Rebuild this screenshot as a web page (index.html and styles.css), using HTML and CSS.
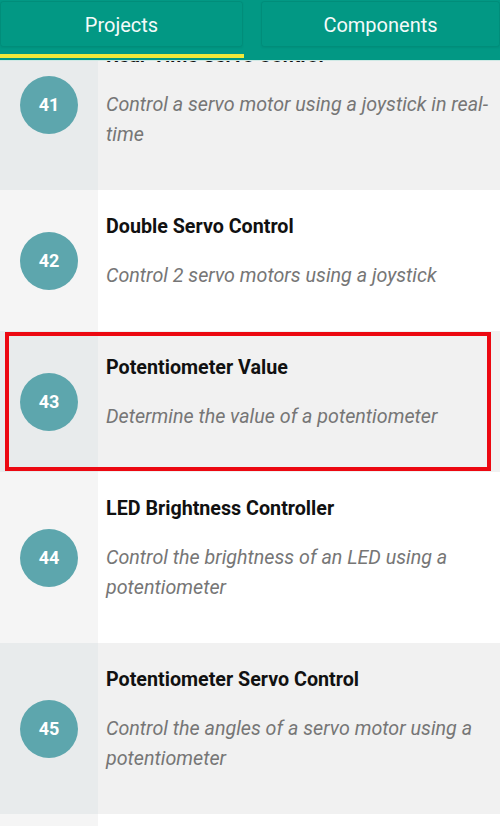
FILE: index.html
```html
<!DOCTYPE html>
<html lang="en">
<head>
  <meta charset="UTF-8" />
  <meta name="viewport" content="width=device-width, initial-scale=1.0"/>
  <title>Projects</title>
  <link rel="stylesheet" href="styles.css">
</head>
<body>
  <header class="topbar">
    <div class="tabs">
      <div class="tab tab-first">Projects</div>
      <div class="tab">Components</div>
    </div>
    <div class="indicator"></div>
  </header>

  <ul class="projects">
    <li class="project shade">
      <div class="num"><span class="badge">41</span></div>
      <div class="info">
        <h2>Real-Time Servo Control</h2>
        <p>Control a servo motor using a joystick in real-time</p>
      </div>
    </li>
    <li class="project">
      <div class="num"><span class="badge">42</span></div>
      <div class="info">
        <h2>Double Servo Control</h2>
        <p>Control 2 servo motors using a joystick</p>
      </div>
    </li>
    <li class="project shade selected">
      <div class="num"><span class="badge">43</span></div>
      <div class="info">
        <h2>Potentiometer Value</h2>
        <p>Determine the value of a potentiometer</p>
      </div>
    </li>
    <li class="project">
      <div class="num"><span class="badge">44</span></div>
      <div class="info">
        <h2>LED Brightness Controller</h2>
        <p>Control the brightness of an LED using a potentiometer</p>
      </div>
    </li>
    <li class="project shade">
      <div class="num"><span class="badge">45</span></div>
      <div class="info">
        <h2>Potentiometer Servo Control</h2>
        <p>Control the angles of a servo motor using a potentiometer</p>
      </div>
    </li>
    <!-- next row, only its top edge shows -->
    <li class="project stub">
      <div class="num"></div>
      <div class="info"></div>
    </li>
  </ul>
</body>
</html>
```

FILE: styles.css
```css
body {
  margin: 0;
  font-family: Roboto, "Noto Sans", sans-serif;
  background: #fff;
  overflow: hidden;
}
.topbar {
  position: fixed;
  top: 0;
  left: 0;
  right: 0;
  height: 61px;
  background: #029884;
  border-bottom: 1px solid #cfe9e5;
  box-sizing: border-box;
  z-index: 5;
}
.tabs {
  display: flex;
  gap: 18px;
  height: 46px;
  padding-top: 1px;
}
.tab {
  flex: 1;
  display: flex;
  align-items: center;
  justify-content: center;
  padding-top: 2px;
  color: #f4fbfa;
  font-size: 20px;
  border: 1px solid rgba(0, 0, 0, 0.07);
  border-radius: 3px;
  box-shadow: 0 1px 2px rgba(0, 0, 0, 0.06);
}
.tab-first {
  flex: 0 0 243px;
  box-sizing: border-box;
}
.indicator {
  margin-top: 7px;
  width: 244px;
  height: 4px;
  background: #f2e93a;
}
.projects {
  list-style: none;
  margin: 0;
  padding: 19px 0 0;
}
.project {
  position: relative;
  display: flex;
  background: #fff;
}
.project .num {
  flex: 0 0 98px;
  display: flex;
  align-items: center;
  justify-content: center;
  background: #f5f5f5;
}
.project.shade {
  background: #f1f1f1;
}
.project.shade .num {
  background: #e8ebec;
}
.project.stub {
  height: 40px;
}
.badge {
  width: 58px;
  height: 58px;
  border-radius: 50%;
  background: #5da6ad;
  color: #fff;
  font-weight: bold;
  font-size: 18px;
  display: flex;
  align-items: center;
  justify-content: center;
}
.info {
  flex: 1;
  padding: 22px 10px 40px 8px;
}
.info h2 {
  margin: 0;
  font-size: 19.7px;
  line-height: 30px;
  font-weight: bold;
  color: #111;
}
.info p {
  margin: 19px 0 0;
  font-size: 19.7px;
  line-height: 30px;
  font-style: italic;
  color: #767676;
}
.selected::after {
  content: "";
  position: absolute;
  top: 1px;
  bottom: 1px;
  left: 5px;
  right: 9px;
  border: 4px solid #ec0811;
}
```
